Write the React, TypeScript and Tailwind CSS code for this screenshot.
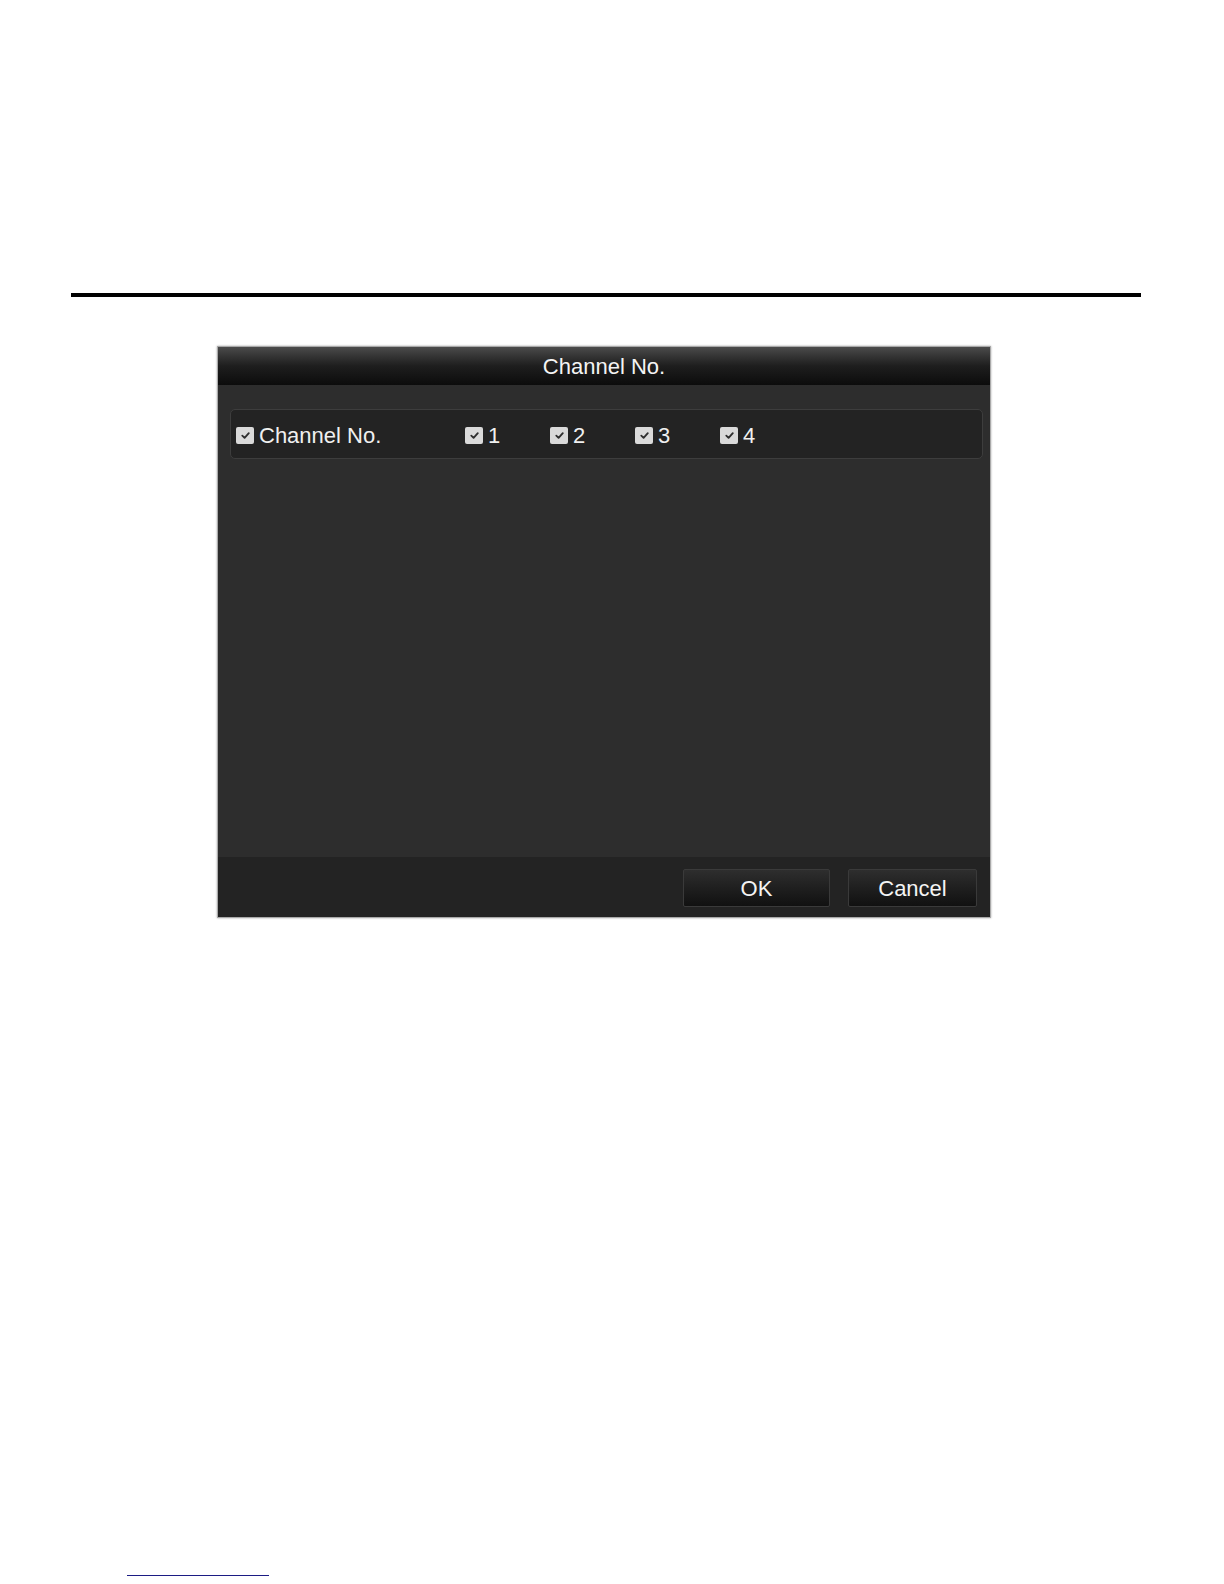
export default function App() {
  const font = { fontFamily: '"Liberation Sans", Arial, sans-serif' }

  return (
    <div className="h-[1580px] overflow-hidden bg-white pt-[293px]" style={font}>
      <div className="ml-[71px] h-[4px] w-[1070px] bg-black" />

      <div className="ml-[217px] mt-[49px] flex h-[572px] w-[774px] flex-col border border-[#a9a9a9] shadow-[0_0_2px_rgba(0,0,0,0.35)]">
        {/* Title bar */}
        <div className="flex h-[38px] items-center justify-center bg-gradient-to-b from-[#4b4b4b] via-[#1e1e1e] to-[#0c0c0c] text-[22px] text-[#f4f4f4]">
          Channel No.
        </div>

        {/* Body */}
        <div className="flex-1 bg-[#2d2d2d] pl-[12px] pr-[7px] pt-[24px]">
          <div className="flex h-[50px] items-center rounded-[5px] border border-[#3d3d3d] bg-[#232323] px-[5px] pt-[2px] text-[22px] text-[#f0f0f0]">
            <div className="flex w-[229px] items-center gap-[5px]">
              <Check />
              <span>Channel No.</span>
            </div>
            {['1', '2', '3', '4'].map((n) => (
              <div key={n} className="flex w-[85px] items-center gap-[5px]">
                <Check />
                <span>{n}</span>
              </div>
            ))}
          </div>
        </div>

        {/* Footer */}
        <div className="flex h-[60px] items-center justify-end gap-[18px] bg-[#232323] pr-[13px] pt-[2px]">
          <button className="h-[38px] w-[147px] rounded-[2px] border border-[#3a3a3a] bg-gradient-to-b from-[#2e2e2e] to-[#111111] text-[22px] text-[#f4f4f4]">
            OK
          </button>
          <button className="h-[38px] w-[129px] rounded-[2px] border border-[#3a3a3a] bg-gradient-to-b from-[#2e2e2e] to-[#111111] text-[22px] text-[#f4f4f4]">
            Cancel
          </button>
        </div>
      </div>

      <div className="ml-[127px] mt-[657px] h-[1px] w-[142px] bg-[#1c1c84]" />
    </div>
  )
}

function Check() {
  return (
    <span className="grid h-[17px] w-[18px] place-items-center rounded-[2px] bg-[#dadada]">
      <svg viewBox="0 0 12 12" className="h-[11px] w-[11px]">
        <path d="M2.5 6.2 L5 8.6 L9.6 3.4" fill="none" stroke="#2e2e2e" strokeWidth="2" strokeLinecap="round" strokeLinejoin="round" />
      </svg>
    </span>
  )
}
